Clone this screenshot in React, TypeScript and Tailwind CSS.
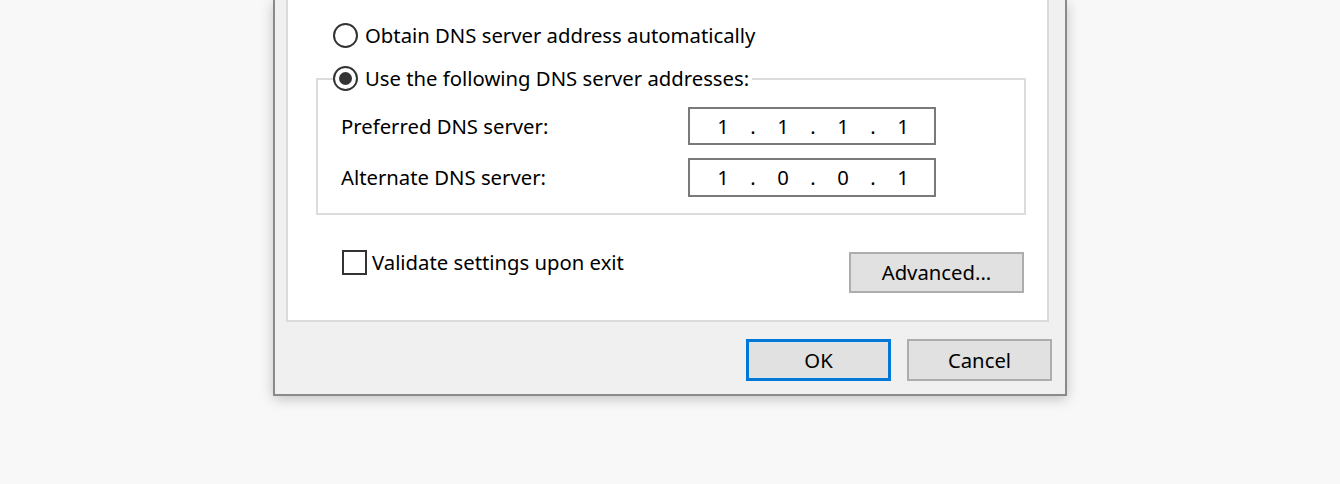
import React from 'react';

const font = { fontFamily: '"Noto Sans", "Open Sans", sans-serif' };

function Radio({ checked }: { checked?: boolean }) {
  return (
    <span className="flex h-[25px] w-[25px] shrink-0 items-center justify-center rounded-full border-2 border-[#333] bg-white">
      {checked && <span className="h-[13px] w-[13px] rounded-full bg-[#333]" />}
    </span>
  );
}

function IpBox({ octets, tall }: { octets: string[]; tall?: boolean }) {
  return (
    <div
      className={`flex w-[248px] items-center border-2 border-[#7a7a7a] bg-white pl-[18px] ${tall ? 'h-[39px]' : 'h-[38px]'}`}
    >
      {octets.map((o, i) => (
        <React.Fragment key={i}>
          {i > 0 && <span className="w-[30px] text-center">.</span>}
          <span className="w-[30px] text-center">{o}</span>
        </React.Fragment>
      ))}
    </div>
  );
}

export default function App() {
  return (
    <div className="h-[484px] w-[1340px] overflow-hidden bg-[#f8f8f8] text-[20.3px] leading-none text-black" style={font}>
      <div className="ml-[273px] flex w-[794px] flex-col border-x-2 border-b-2 border-[#8a8a8a] bg-[#f0f0f0] shadow-[0_3px_12px_rgba(0,0,0,0.22)]">
        {/* white tab page */}
        <div className="ml-[11px] flex w-[763px] flex-col border-x-2 border-b-2 border-[#dadada] bg-white pt-[23px] pb-[27px]">
          <label className="ml-[45px] flex items-center gap-[7px]">
            <Radio />
            <span>Obtain DNS server address automatically</span>
          </label>

          <fieldset className="mt-[18px] ml-[28px] w-[710px] border-2 border-[#dcdcdc] px-[15px] pt-[16px] pb-[16px]">
            <legend className="flex items-center gap-[7px] pr-[3px]">
              <Radio checked />
              <span>Use the following DNS server addresses:</span>
            </legend>
            <div className="flex flex-col gap-[13px] pl-[8px]">
              <div className="flex items-center">
                <span className="w-[347px]">Preferred DNS server:</span>
                <IpBox octets={['1', '1', '1', '1']} />
              </div>
              <div className="flex items-center">
                <span className="w-[347px]">Alternate DNS server:</span>
                <IpBox octets={['1', '0', '0', '1']} tall />
              </div>
            </div>
          </fieldset>

          <div className="flex items-start justify-between pr-[23px]">
            <label className="mt-[35px] ml-[54px] flex items-center gap-[5px]">
              <span className="h-[25px] w-[25px] border-2 border-[#333] bg-white" />
              <span>Validate settings upon exit</span>
            </label>
            <button className="mt-[37px] h-[41px] w-[175px] border-2 border-[#adadad] bg-[#e1e1e1]">
              Advanced...
            </button>
          </div>
        </div>

        <div className="flex justify-end gap-[16px] pt-[17px] pr-[13px] pb-[13px]">
          <button className="h-[42px] w-[145px] border-[3px] border-[#0078d7] bg-[#e1e1e1]">OK</button>
          <button className="h-[42px] w-[145px] border-2 border-[#adadad] bg-[#e1e1e1]">Cancel</button>
        </div>
      </div>
    </div>
  );
}
